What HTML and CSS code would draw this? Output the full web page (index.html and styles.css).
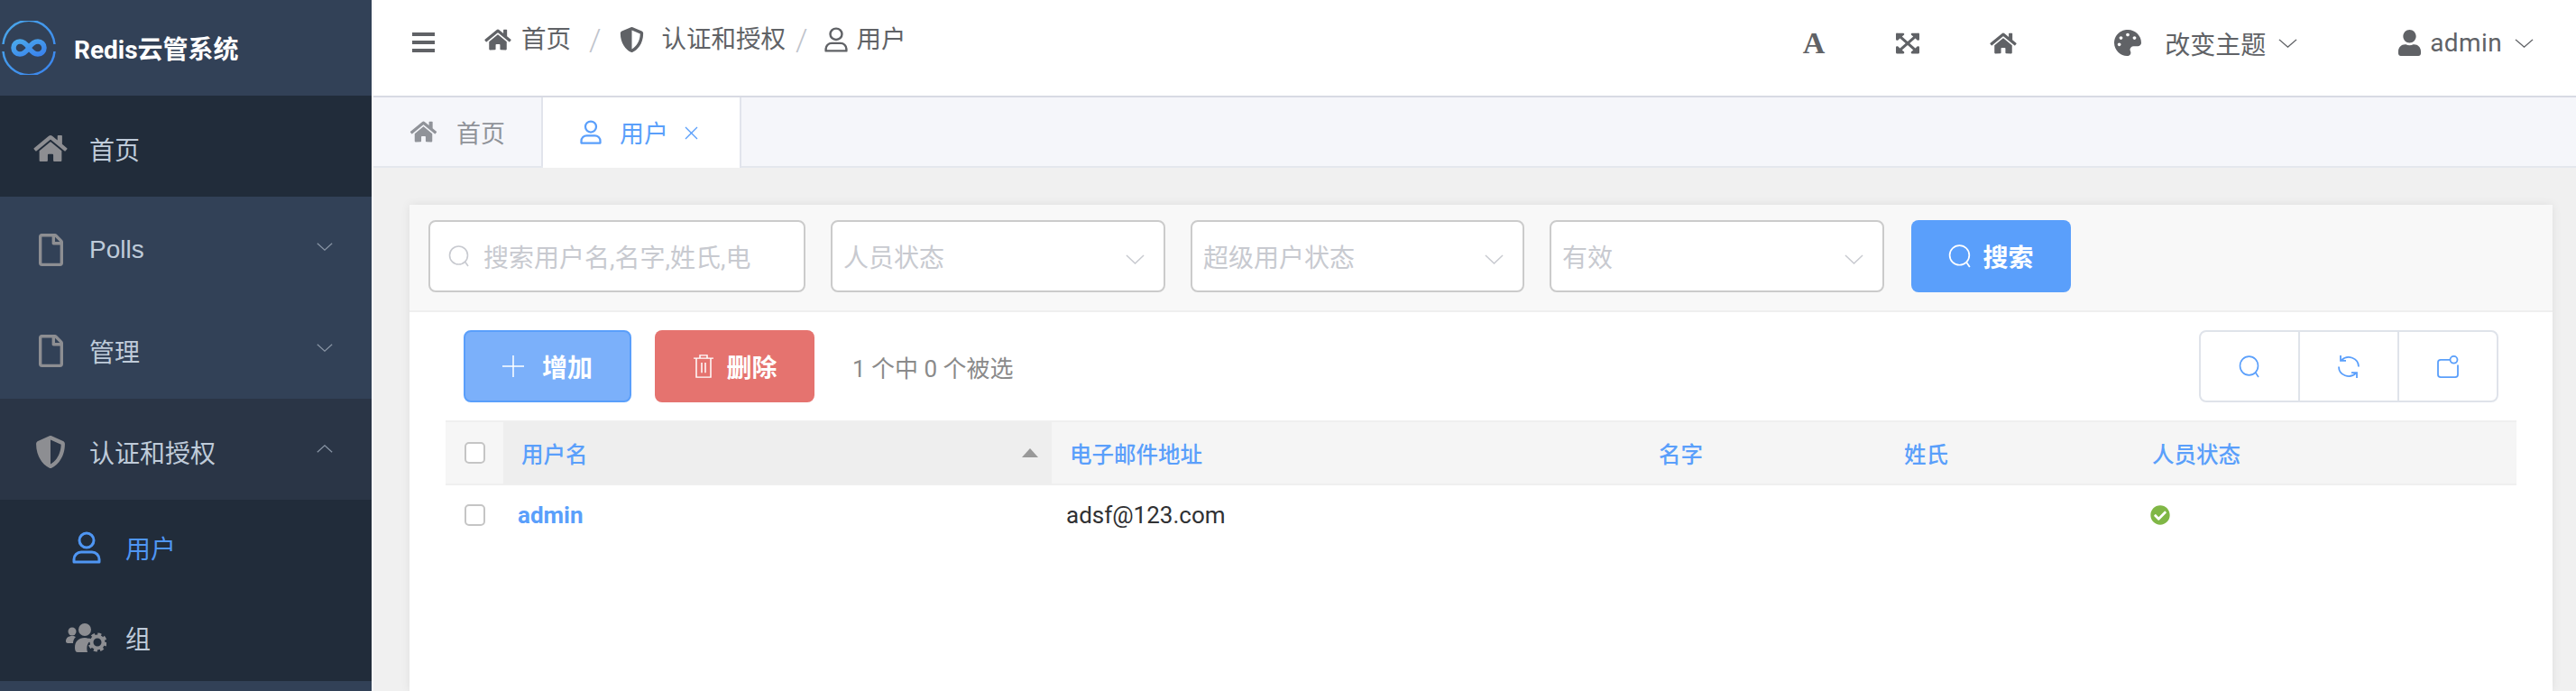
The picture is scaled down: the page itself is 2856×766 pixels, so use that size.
FILE: index.html
```html
<!DOCTYPE html>
<html lang="zh-CN">
<head>
    <meta charset="UTF-8">
    <title>Redis云管系统</title>
    <link rel="stylesheet" href="styles.css">
</head>
<body>
    <svg class="sprite">
        <symbol id="i-home" viewBox="0 0 576 512"><path fill="currentColor" d="M280.37 148.26L96 300.11V464a16 16 0 0 0 16 16l112.06-.29a16 16 0 0 0 15.92-16V368a16 16 0 0 1 16-16h64a16 16 0 0 1 16 16v95.64a16 16 0 0 0 16 16.05L464 480a16 16 0 0 0 16-16V300L295.67 148.26a12.19 12.19 0 0 0-15.3 0zM571.6 251.47L488 182.56V44.05a12 12 0 0 0-12-12h-56a12 12 0 0 0-12 12v72.61L318.47 43a48 48 0 0 0-61 0L4.34 251.47a12 12 0 0 0-1.6 16.9l25.5 31A12 12 0 0 0 45.15 301l235.22-193.74a12.19 12.19 0 0 1 15.3 0L530.9 301a12 12 0 0 0 16.9-1.6l25.5-31a12 12 0 0 0-1.7-16.93z"/></symbol>
        <symbol id="i-file" viewBox="0 0 384 512"><path fill="currentColor" d="M369.9 97.9L286 14C277 5 264.8-.1 252.1-.1H48C21.5 0 0 21.5 0 48v416c0 26.5 21.5 48 48 48h288c26.5 0 48-21.5 48-48V131.9c0-12.7-5.1-25-14.1-34zM332.1 128H256V51.9l76.1 76.1zM48 464V48h160v104c0 13.3 10.7 24 24 24h104v288H48z"/></symbol>
        <symbol id="i-shield" viewBox="0 0 512 512" preserveAspectRatio="none"><path fill="currentColor" d="M466.5 83.7l-192-80a48.15 48.15 0 0 0-36.9 0l-192 80C27.7 91.1 16 108.6 16 128c0 198.5 114.5 335.7 221.5 380.3 11.8 4.9 25.1 4.9 36.9 0C360.1 472.6 496 349.3 496 128c0-19.4-11.7-36.9-29.5-44.3zM256.1 446.3l-.1-381 175.9 73.3c-3.3 151.4-82.1 261.1-175.8 307.7z"/></symbol>
        <symbol id="i-user-line" viewBox="0 0 32 36" preserveAspectRatio="none"><g fill="none" stroke="currentColor" stroke-width="3"><circle cx="16" cy="10" r="8"/><path stroke-linejoin="round" d="M2 34v-3a8 8 0 0 1 8-8h12a8 8 0 0 1 8 8v3z"/></g></symbol>
        <symbol id="i-user" viewBox="0 0 448 512" preserveAspectRatio="none"><path fill="currentColor" d="M224 256c70.7 0 128-57.3 128-128S294.7 0 224 0 96 57.3 96 128s57.3 128 128 128zm89.6 32h-16.7c-22.2 10.2-46.9 16-72.9 16s-50.6-5.8-72.9-16h-16.7C60.2 288 0 348.2 0 422.4V464c0 26.5 21.5 48 48 48h352c26.5 0 48-21.5 48-48v-41.6c0-74.2-60.2-134.4-134.4-134.4z"/></symbol>
        <symbol id="i-palette" viewBox="0 0 512 512" preserveAspectRatio="none"><path fill="currentColor" d="M204.3 5C104.9 24.4 24.8 104.3 5.2 203.4c-37 187 131.7 326.4 258.8 306.7 41.2-6.4 61.4-54.6 42.5-91.7-23.1-45.4 9.9-98.4 60.9-98.4h79.7c35.8 0 64.8-29.6 64.9-65.3C511.5 97.1 368.1-26.9 204.3 5zM96 320c-17.7 0-32-14.3-32-32s14.3-32 32-32 32 14.3 32 32-14.3 32-32 32zm32-128c-17.7 0-32-14.3-32-32s14.3-32 32-32 32 14.3 32 32-14.3 32-32 32zm128-64c-17.7 0-32-14.3-32-32s14.3-32 32-32 32 14.3 32 32-14.3 32-32 32zm128 64c-17.7 0-32-14.3-32-32s14.3-32 32-32 32 14.3 32 32-14.3 32-32 32z"/></symbol>
        <symbol id="i-expand" viewBox="0 0 448 512" preserveAspectRatio="none"><path fill="currentColor" d="M448 344v112a23.94 23.94 0 0 1-24 24H312c-21.39 0-32.09-25.9-17-41l36.2-36.2L224 295.6 116.77 402.9 153 439c15.09 15.1 4.39 41-17 41H24a23.94 23.94 0 0 1-24-24V344c0-21.4 25.89-32.1 41-17l36.19 36.2L184.46 256 77.18 148.7 41 185c-15.1 15.1-41 4.4-41-17V56a23.94 23.94 0 0 1 24-24h112c21.39 0 32.09 25.9 17 41l-36.2 36.2L224 216.4l107.23-107.3L295 73c-15.09-15.1-4.39-41 17-41h112a23.94 23.94 0 0 1 24 24v112c0 21.4-25.89 32.1-41 17l-36.19-36.2L263.54 256l107.28 107.3L407 327.1c15.1-15.2 41-4.5 41 16.9z"/></symbol>
        <symbol id="i-check" viewBox="0 0 512 512" preserveAspectRatio="none"><path fill="currentColor" d="M504 256c0 136.967-111.033 248-248 248S8 392.967 8 256 119.033 8 256 8s248 111.033 248 248zM227.314 387.314l184-184c6.248-6.248 6.248-16.379 0-22.627l-22.627-22.627c-6.248-6.249-16.379-6.249-22.628 0L216 308.118l-70.059-70.059c-6.248-6.248-16.379-6.248-22.628 0l-22.627 22.627c-6.248 6.248-6.248 16.379 0 22.627l104 104c6.249 6.249 16.379 6.249 22.628.001z"/></symbol>
        <symbol id="i-chevron" viewBox="0 0 22 12" preserveAspectRatio="none"><path fill="none" stroke="currentColor" stroke-width="1.5" d="M1 1l10 10L21 1"/></symbol>
        <symbol id="i-search" viewBox="0 0 24 24" preserveAspectRatio="none"><g fill="none" stroke="currentColor" stroke-width="1.6"><circle cx="11.5" cy="11" r="10"/><path d="M18.5 18l3.5 5"/></g></symbol>
        <symbol id="i-refresh" viewBox="0 0 24 26" preserveAspectRatio="none"><g fill="none" stroke="currentColor" stroke-width="1.8"><path d="M23 13A11 11 0 0 0 4 5.500M1 13a11 11 0 0 0 19 7.500"/><path d="M3 0v6h6M21 26v-6h-6"/></g></symbol>
        <symbol id="i-columns" viewBox="0 0 24 26" preserveAspectRatio="none"><g fill="none" stroke="currentColor" stroke-width="1.8"><path d="M15 5H4a3 3 0 0 0-3 3v14a3 3 0 0 0 3 3h16a3 3 0 0 0 3-3V11"/><ellipse cx="18.500" cy="5" rx="4" ry="4"/></g></symbol>
        <symbol id="i-group" viewBox="0 0 45 32"><g fill="currentColor"><circle cx="7" cy="9" r="4.500"/><path d="M0 20c0-4 3-6 7-6 2 0 3 .5 4 1-2 2-3 4-3 7H2c-1 0-2-1-2-2z"/><circle cx="21" cy="7" r="7"/><path d="M10 27c0-7 4-11 11-11 3 0 5 1 7 2-3 3-6 7-4 14H13c-2 0-3-2-3-5z"/></g><circle cx="35" cy="21" r="6.500" fill="none" stroke="currentColor" stroke-width="4"/><circle cx="35" cy="21" r="9" fill="none" stroke="currentColor" stroke-width="3" stroke-dasharray="4 3.070"/></symbol>
    </svg>

    <aside class="sidebar">
        <div class="logo">
            <svg class="logo-mark" viewBox="0 0 60 60">
                <defs>
                    <linearGradient id="logoBlue" x1="0" y1="0" x2="1" y2="1">
                        <stop offset="0" stop-color="#4aa8ea"/>
                        <stop offset="1" stop-color="#3a83ee"/>
                    </linearGradient>
                </defs>
                <path fill="none" stroke="url(#logoBlue)" stroke-width="2.500" d="M1.500 26A28.600 28.600 0 0 1 58.500 26M58.500 34A28.600 28.600 0 0 1 1.500 34"/>
                <path fill="none" stroke="url(#logoBlue)" stroke-width="5.500" d="M30 30c-3-4.500-6-7-10-7a7 7 0 0 0 0 14c4 0 7-2.500 10-7s6-7 10-7a7 7 0 0 1 0 14c-4 0-7-2.500-10-7z"/>
            </svg>
            <span class="logo-text">Redis云管系统</span>
        </div>
        <a class="menu-item is-current">
            <svg class="menu-icon icon-home"><use href="#i-home"/></svg>
            <span>首页</span>
        </a>
        <a class="menu-item">
            <svg class="menu-icon icon-file"><use href="#i-file"/></svg>
            <span>Polls</span>
            <svg class="menu-arrow"><use href="#i-chevron"/></svg>
        </a>
        <a class="menu-item">
            <svg class="menu-icon icon-file"><use href="#i-file"/></svg>
            <span>管理</span>
            <svg class="menu-arrow"><use href="#i-chevron"/></svg>
        </a>
        <a class="menu-item is-open">
            <svg class="menu-icon icon-shield"><use href="#i-shield"/></svg>
            <span>认证和授权</span>
            <svg class="menu-arrow arrow-up"><use href="#i-chevron"/></svg>
        </a>
        <div class="submenu">
            <a class="sub-item is-active">
                <span class="sub-icon"><svg class="icon-user-side"><use href="#i-user-line"/></svg></span>
                <span>用户</span>
            </a>
            <a class="sub-item">
                <span class="sub-icon"><svg class="icon-group"><use href="#i-group"/></svg></span>
                <span>组</span>
            </a>
        </div>
    </aside>

    <div class="main">
        <header class="topbar">
            <svg class="burger" viewBox="0 0 25 22" preserveAspectRatio="none">
                <path fill="currentColor" d="M0 0h25v4H0zM0 9h25v4H0zM0 18h25v4H0z"/>
            </svg>
            <nav class="crumbs">
                <svg class="crumb-home"><use href="#i-home"/></svg>
                <span class="crumb-text">首页</span>
                <span class="crumb-sep">/</span>
                <svg class="crumb-shield"><use href="#i-shield"/></svg>
                <span class="crumb-text">认证和授权</span>
                <span class="crumb-sep sep-tight">/</span>
                <svg class="crumb-user"><use href="#i-user-line"/></svg>
                <span class="crumb-text">用户</span>
            </nav>
            <div class="top-tools">
                <span class="tool-font">A</span>
                <svg class="tool-expand"><use href="#i-expand"/></svg>
                <svg class="tool-home"><use href="#i-home"/></svg>
                <svg class="tool-palette"><use href="#i-palette"/></svg>
                <span class="tool-text">改变主题</span>
                <svg class="tool-arrow"><use href="#i-chevron"/></svg>
                <svg class="tool-user"><use href="#i-user"/></svg>
                <span class="tool-name">admin</span>
                <svg class="tool-arrow"><use href="#i-chevron"/></svg>
            </div>
        </header>

        <div class="tabs">
            <a class="tab tab-home">
                <svg class="tab-home-icon"><use href="#i-home"/></svg>
                <span>首页</span>
            </a>
            <a class="tab tab-active">
                <svg class="tab-user-icon"><use href="#i-user-line"/></svg>
                <span>用户</span>
                <svg class="tab-close" viewBox="0 0 15 15"><path fill="none" stroke="currentColor" stroke-width="1.300" d="M1 1l13 13M14 1L1 14"/></svg>
            </a>
        </div>

        <div class="content">
            <section class="card">
                <form class="filters">
                    <div class="field field-search">
                        <svg class="field-icon"><use href="#i-search"/></svg>
                        <span>搜索用户名,名字,姓氏,电</span>
                    </div>
                    <div class="field field-select w-371"><span>人员状态</span><svg class="select-arrow"><use href="#i-chevron"/></svg></div>
                    <div class="field field-select w-370"><span>超级用户状态</span><svg class="select-arrow"><use href="#i-chevron"/></svg></div>
                    <div class="field field-select w-371"><span>有效</span><svg class="select-arrow"><use href="#i-chevron"/></svg></div>
                    <button type="button" class="btn-search"><svg class="btn-search-icon"><use href="#i-search"/></svg>搜索</button>
                </form>

                <div class="toolbar">
                    <button type="button" class="btn btn-add">
                        <svg class="btn-plus" viewBox="0 0 24 24"><path fill="none" stroke="currentColor" stroke-width="1.500" d="M12 0v24M0 12h24"/></svg>增加
                    </button>
                    <button type="button" class="btn btn-del">
                        <svg class="btn-trash" viewBox="0 0 22 32" preserveAspectRatio="none"><path fill="none" stroke="currentColor" stroke-width="1.500" d="M0 5h22M7 5V1h8v4M3 5v26h16V5M9 11v14M13 11v14"/></svg>删除
                    </button>
                    <span class="selected">1 个中 0 个被选</span>
                    <div class="tool-group">
                        <span class="tool-btn"><svg><use href="#i-search"/></svg></span>
                        <span class="tool-btn"><svg><use href="#i-refresh"/></svg></span>
                        <span class="tool-btn"><svg><use href="#i-columns"/></svg></span>
                    </div>
                </div>

                <table class="grid">
                    <colgroup>
                        <col class="c-check"><col class="c-name"><col class="c-mail"><col class="c-first"><col class="c-last"><col>
                    </colgroup>
                    <thead>
                        <tr>
                            <th class="th-check"><span class="checkbox"></span></th>
                            <th class="th-sorted"><div class="th-inner"><span>用户名</span><i class="sort-up"></i></div></th>
                            <th>电子邮件地址</th>
                            <th>名字</th>
                            <th>姓氏</th>
                            <th>人员状态</th>
                        </tr>
                    </thead>
                    <tbody>
                        <tr>
                            <td class="td-check"><span class="checkbox"></span></td>
                            <td><a class="user-link">admin</a></td>
                            <td>adsf@123.com</td>
                            <td></td>
                            <td></td>
                            <td class="td-status"><svg class="ok-icon"><use href="#i-check"/></svg></td>
                        </tr>
                    </tbody>
                </table>
            </section>
        </div>
    </div>
</body>
</html>
```

FILE: styles.css
```css
* {
    box-sizing: border-box;
}
html, body {
    height: 100%;
}
body {
    margin: 0;
    display: flex;
    height: 100vh;
    overflow: hidden;
    font-family: Roboto, "Noto Sans CJK SC", sans-serif;
    background-color: #f0f0f0;
    color: #303133;
}
.sprite {
    display: none;
}

/* sidebar */
.sidebar {
    width: 412px;
    flex: none;
    background-color: #324157;
    color: #bfcbd9;
    font-family: "Liberation Sans", "Noto Sans CJK SC", sans-serif;
    font-size: 28px;
}
.logo {
    height: 106px;
    display: flex;
    align-items: center;
    padding-left: 2px;
}
.logo-mark {
    width: 60px;
    height: 60px;
    flex: none;
}
.logo-text {
    margin-left: 20px;
    margin-top: -1px;
    color: #fff;
    font-family: Roboto, "Noto Sans CJK SC", sans-serif;
    font-size: 28px;
    font-weight: 700;
}
.menu-item {
    height: 112px;
    display: flex;
    align-items: center;
    padding-top: 5px;
    position: relative;
}
.menu-item span {
    position: absolute;
    left: 99px;
}
.menu-item.is-current {
    background-color: #212c3a;
}
.menu-item.is-open {
    background-color: #2a3546;
}
.menu-icon {
    color: #8d8e92;
    flex: none;
}
.icon-home {
    width: 40px;
    height: 33px;
    margin-left: 36px;
}
.icon-file {
    width: 27px;
    height: 36px;
    margin-left: 43px;
}
.icon-shield {
    width: 34px;
    height: 36px;
    margin-left: 39px;
}
.menu-arrow {
    width: 18px;
    height: 9px;
    margin-left: auto;
    margin-right: 43px;
    margin-top: -7px;
    color: #8793a3;
}
.arrow-up {
    transform: rotate(180deg);
}
.submenu {
    height: 201px;
    padding-top: 3px;
    overflow: hidden;
    background-color: #212c3a;
}
.sub-item {
    height: 100px;
    display: flex;
    align-items: center;
}
.sub-icon {
    width: 45px;
    margin-left: 73px;
    margin-right: 21px;
    display: flex;
    justify-content: center;
    color: #8d8e92;
}
.icon-user-side {
    width: 32px;
    height: 36px;
}
.icon-group {
    width: 45px;
    height: 32px;
}
.sub-item.is-active {
    color: #4f96f3;
}
.sub-item.is-active .sub-icon {
    color: #4f96f3;
}

/* top bar */
.main {
    flex: 1;
    min-width: 0;
    display: flex;
    flex-direction: column;
    border-left: 2px solid #f7f7f9;
}
.topbar {
    height: 108px;
    flex: none;
    display: flex;
    align-items: flex-start;
    background-color: #fff;
    border-bottom: 2px solid #d8dae3;
    color: #606266;
    font-size: 27px;
}
.burger {
    width: 25px;
    height: 22px;
    margin: 36px 0 0 43px;
    flex: none;
}
.crumbs {
    display: flex;
    align-items: center;
    height: 88px;
    margin-left: 54px;
}
.crumb-home {
    width: 32px;
    height: 26px;
    margin-top: -1px;
}
.crumb-text {
    margin-left: 10px;
    font-size: 27.5px;
    line-height: 88px;
}
.crumb-sep {
    margin: 0 20px 0 20px;
    font-size: 34px;
    font-weight: 300;
    color: #c0c4cc;
}
.sep-tight {
    margin: 0 18px 0 11px;
}
.crumb-shield {
    width: 27px;
    height: 28px;
}
.crumb-shield + .crumb-text {
    margin-left: 20px;
}
.crumb-user {
    width: 26px;
    height: 28px;
    margin-top: -1px;
}
.top-tools {
    margin-left: auto;
    display: flex;
    align-items: center;
    height: 95px;
    padding-right: 47px;
}
.tool-font {
    font-family: "Liberation Serif", serif;
    font-weight: 700;
    font-size: 34px;
    width: 26px;
    text-align: center;
}
.tool-expand {
    width: 26px;
    height: 26px;
    margin-left: 78px;
}
.tool-home {
    width: 32px;
    height: 26px;
    margin-left: 77px;
}
.tool-palette {
    width: 30px;
    height: 29px;
    margin-left: 107px;
}
.tool-text {
    margin-left: 26px;
    font-size: 28px;
}
.tool-arrow {
    width: 21px;
    height: 10px;
    margin-left: 14px;
}
.tool-user {
    width: 25px;
    height: 29px;
    margin-left: 112px;
}
.tool-name {
    margin-left: 10px;
    font-size: 28px;
    letter-spacing: 0.4px;
}

/* tabs */
.tabs {
    height: 78px;
    flex: none;
    display: flex;
    background-color: #f5f6fa;
    border-bottom: 2px solid #e4e7ed;
    font-size: 27px;
}
.tab {
    display: flex;
    align-items: center;
    height: 76px;
    color: #909399;
}
.tab-home {
    width: 188px;
    padding-left: 40px;
    border-right: 2px solid #e1e4ec;
}
.tab-home-icon {
    width: 31px;
    height: 26px;
    margin-right: 21px;
}
.tab-active {
    width: 220px;
    height: 78px;
    padding: 0 0 2px 41px;
    background-color: #fff;
    border-right: 2px solid #e1e4ec;
    color: #5a9ffb;
}
.tab-user-icon {
    width: 24px;
    height: 27px;
    margin-right: 20px;
}
.tab-close {
    width: 15px;
    height: 15px;
    margin-left: 18px;
    margin-top: 3px;
}

/* card */
.content {
    flex: 1;
    min-height: 0;
    padding: 41px 26px 0 40px;
}
.card {
    height: 100%;
    background-color: #fff;
    box-shadow: 0 0 10px rgba(0, 0, 0, 0.08);
}
.filters {
    height: 119px;
    display: flex;
    gap: 28px;
    padding: 17px 21px 0;
    background-color: #f8f8f8;
    border-bottom: 2px solid #efefef;
}
.field {
    height: 80px;
    display: flex;
    align-items: center;
    background-color: #fff;
    border: 2px solid #cbcbcb;
    border-radius: 8px;
    color: #c8cad0;
    font-size: 28px;
}
.field-search {
    width: 418px;
    padding-left: 20px;
}
.field-icon {
    width: 24px;
    height: 24px;
    margin-right: 15px;
    flex: none;
}
.field-select {
    padding-left: 12px;
}
.w-371 {
    width: 371px;
}
.w-370 {
    width: 370px;
}
.select-arrow {
    width: 21px;
    height: 11px;
    margin-left: auto;
    margin-right: 21px;
    margin-top: 6px;
}
.btn-search {
    width: 177px;
    height: 80px;
    margin-left: 2px;
    display: flex;
    align-items: center;
    justify-content: center;
    border: none;
    border-radius: 8px;
    background-color: #5a9ffb;
    color: #fff;
    font-family: inherit;
    font-size: 28px;
    font-weight: 700;
}
.btn-search-icon {
    width: 26px;
    height: 26px;
    margin-right: 12px;
}
.toolbar {
    height: 120px;
    display: flex;
    align-items: center;
    padding: 0 60px;
}
.btn {
    height: 80px;
    display: flex;
    align-items: center;
    justify-content: center;
    border-radius: 8px;
    color: #fff;
    font-family: inherit;
    font-size: 28px;
    font-weight: 700;
}
.btn-add {
    width: 186px;
    background-color: #7bb0fa;
    border: 2px solid #5a9ffb;
}
.btn-plus {
    width: 24px;
    height: 24px;
    margin-right: 20px;
}
.btn-del {
    width: 177px;
    margin-left: 26px;
    padding-left: 8px;
    background-color: #e5736f;
    border: none;
}
.btn-trash {
    width: 22px;
    height: 26px;
    margin-right: 14px;
}
.selected {
    margin-left: 42px;
    color: #8a8a8a;
    font-size: 26px;
}
.tool-group {
    margin-left: auto;
    width: 332px;
    height: 80px;
    display: flex;
    border: 2px solid #dfe3ea;
    border-radius: 8px;
}
.tool-btn {
    flex: 1;
    display: flex;
    align-items: center;
    justify-content: center;
    color: #5a9ffb;
    border-left: 2px solid #dfe3ea;
}
.tool-btn:first-child {
    border-left: none;
}
.tool-btn svg {
    width: 24px;
    height: 25px;
}

/* table */
.grid {
    width: 2296px;
    margin-left: 40px;
    border-collapse: collapse;
    table-layout: fixed;
    font-size: 26px;
}
.c-check {
    width: 64px;
}
.c-name {
    width: 608px;
}
.c-mail {
    width: 653px;
}
.c-first {
    width: 272px;
}
.c-last {
    width: 275px;
}
.grid th {
    height: 70px;
    padding: 0 0 0 20px;
    background-color: #f5f5f5;
    border-top: 2px solid #efefef;
    border-bottom: 2px solid #efefef;
    color: #5a9ffb;
    font-size: 24.5px;
    font-weight: 500;
    text-align: left;
}
.grid .th-check {
    padding-left: 21px;
    background-color: #f6f6f6;
}
.grid .th-sorted {
    background-color: #eeeeee;
}
.th-inner {
    display: flex;
    align-items: center;
    padding-right: 15px;
}
.sort-up {
    margin-left: auto;
    width: 0;
    height: 0;
    border-left: 9px solid transparent;
    border-right: 9px solid transparent;
    border-bottom: 10px solid #999;
}
.grid td {
    height: 66px;
    padding: 0 0 0 16px;
    color: #303133;
}
.grid .td-check {
    padding-left: 21px;
}
.grid .td-status {
    padding-left: 18px;
}
.checkbox {
    display: block;
    width: 23px;
    height: 24px;
    background-color: #fff;
    border: 2px solid #c5c5c5;
    border-radius: 5px;
}
.user-link {
    color: #5a9ffb;
    font-weight: 700;
}
.ok-icon {
    display: block;
    width: 22px;
    height: 22px;
    color: #80b746;
}
```
